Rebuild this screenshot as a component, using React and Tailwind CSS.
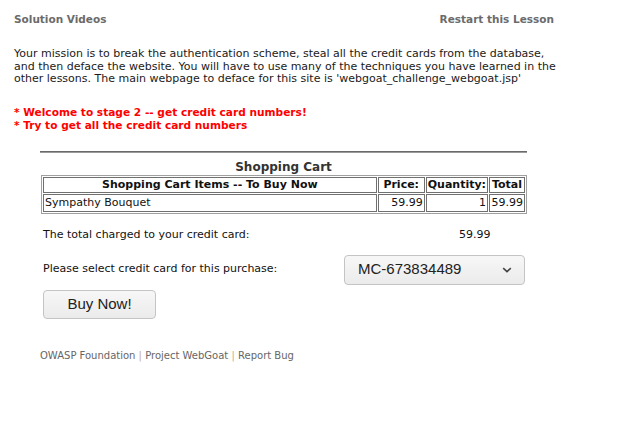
export default function App() {
  return (
    <div className="w-[633px] h-[435px] bg-white relative" style={{ fontFamily: '"DejaVu Sans", sans-serif' }}>
      {/* top links */}
      <div className="flex justify-between w-[540px] ml-[14px] pt-[12px] text-[10.5px] font-bold text-[#6b6b6b] leading-[14px]">
        <span>Solution Videos</span>
        <span>Restart this Lesson</span>
      </div>

      {/* mission */}
      <div className="ml-[14px] mt-[22px] w-[600px] text-[11px] leading-[12.5px] text-[#1a1a1a]">
        <p>Your mission is to break the authentication scheme, steal all the credit cards from the database,</p>
        <p>and then deface the website. You will have to use many of the techniques you have learned in the</p>
        <p>other lessons. The main webpage to deface for this site is 'webgoat_challenge_webgoat.jsp'</p>
      </div>

      <div className="ml-[14px] mt-[20px] text-[10.6px] leading-[13px] font-bold text-[#ff0000]">
        <p>* Welcome to stage 2 -- get credit card numbers!</p>
        <p>* Try to get all the credit card numbers</p>
      </div>

      {/* cart */}
      <div className="ml-[40px] mt-[19px] w-[487px]">
        <div className="h-[2px] bg-[#6a6a6a] border-b border-[#9a9a9a]" />
        <div className="text-center text-[12px] font-bold text-[#333] leading-[14px] mt-[7px] mb-[1px]">Shopping Cart</div>
        <table className="ml-[1px] w-[486px] border border-[#a0a0a0] border-separate border-spacing-px text-[11px] text-[#111]">
          <thead>
            <tr className="font-bold">
              <th className="border border-[#707070] h-[16px] leading-[13px] px-[1px] font-bold">Shopping Cart Items -- To Buy Now</th>
              <th className="border border-[#707070] w-[47px] leading-[13px] px-[1px] font-bold">Price:</th>
              <th className="border border-[#707070] w-[62px] leading-[13px] px-[1px] font-bold">Quantity:</th>
              <th className="border border-[#707070] w-[36px] leading-[13px] px-[1px] font-bold">Total</th>
            </tr>
          </thead>
          <tbody>
            <tr>
              <td className="border border-[#707070] h-[18px] leading-[13px] px-[1px] text-left">Sympathy Bouquet</td>
              <td className="border border-[#707070] leading-[13px] px-[1px] text-right">59.99</td>
              <td className="border border-[#707070] leading-[13px] px-[1px] text-right">1</td>
              <td className="border border-[#707070] leading-[13px] px-[1px] text-right">59.99</td>
            </tr>
          </tbody>
        </table>

        <div className="flex mt-[14px] text-[11px] leading-[14px] text-[#111]">
          <span className="ml-[3px] w-[416px]">The total charged to your credit card:</span>
          <span>59.99</span>
        </div>

        <div className="flex items-center mt-[13px]">
          <span className="ml-[3px] w-[301px] text-[11px] text-[#111]">Please select credit card for this purchase:</span>
          <div className="w-[181px] h-[30px] rounded-[4px] border border-[#c4c4c4] bg-gradient-to-b from-[#f7f7f7] to-[#ebebeb] flex items-center justify-between pl-[13px] pr-[12px] text-[15px] text-[#222]" style={{ fontFamily: '"Liberation Sans", sans-serif' }}>
            <span>MC-673834489</span>
            <svg width="10" height="6" viewBox="0 0 10 6" fill="none">
              <path d="M1.2 1.2 L5 4.6 L8.8 1.2" stroke="#444" strokeWidth="1.6" />
            </svg>
          </div>
        </div>

        <button className="ml-[3px] mt-[5px] w-[113px] h-[29px] rounded-[4px] border border-[#c4c4c4] bg-gradient-to-b from-[#f7f7f7] to-[#ebebeb] text-[15px] text-[#222]" style={{ fontFamily: '"Liberation Sans", sans-serif' }}>
          Buy Now!
        </button>

        <div className="mt-[29px] text-[10px] text-[#666]">
          <span>OWASP Foundation</span>
          <span className="text-[#c8a890]"> | </span>
          <span>Project WebGoat</span>
          <span className="text-[#c8a890]"> | </span>
          <span>Report Bug</span>
        </div>
      </div>
    </div>
  )
}
